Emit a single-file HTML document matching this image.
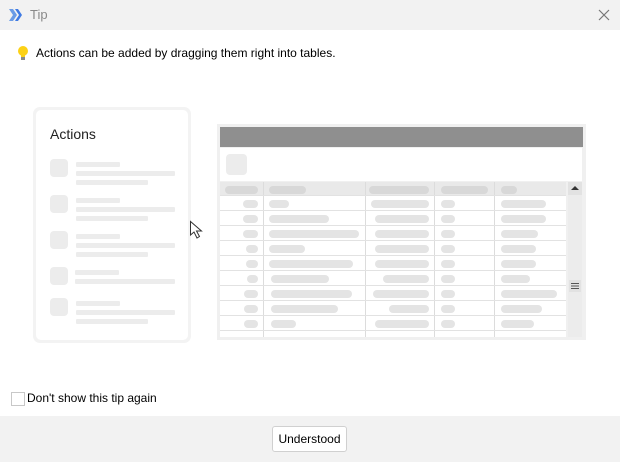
<!DOCTYPE html><html><head><style>
body{margin:0;width:620px;height:462px;position:relative;overflow:hidden;background:#fff;font-family:"Liberation Sans",sans-serif;}
.a{position:absolute}
.p{position:absolute;height:8px;border-radius:4px;background:#e4e4e4}
.l{position:absolute;height:5px;background:#ececec;border-radius:1px}
.sq{position:absolute;width:18px;height:18px;border-radius:4px;background:#ececec}
</style></head><body>
<div class="a" style="left:0;top:0;width:620px;height:30px;background:#f2f2f2"></div>
<svg class="a" style="left:9px;top:9px" width="14" height="12"><path d="M0 0h4l4 6-4 6H0l4-6z" fill="#6a9be6"/><path d="M6 0h3l4 6-4 6H6l4-6z" fill="#3f7ae3"/></svg>
<div class="a" style="left:30px;top:7px;font-size:13px;color:#8a8a8a">Tip</div>
<svg class="a" style="left:598px;top:9px" width="12" height="12"><path d="M1 1L11 11M11 1L1 11" stroke="#777" stroke-width="1.2"/></svg>
<svg class="a" style="left:17px;top:45px" width="12" height="17"><circle cx="6" cy="6" r="5" fill="#fcd116"/><rect x="4" y="8" width="4" height="4" fill="#fcd116"/><rect x="4" y="12" width="4" height="3" fill="#8a8a8a"/></svg>
<div class="a" style="left:36px;top:46px;font-size:12px;color:#000">Actions can be added by dragging them right into tables.</div>

<div class="a" style="left:33px;top:107px;width:158px;height:236px;background:#f3f3f3;border-radius:7px"></div>
<div class="a" style="left:36px;top:110px;width:152px;height:230px;background:#fff;border-radius:5px"></div>
<div class="a" style="left:50px;top:126px;font-size:14px;color:#222">Actions</div>
<div class="sq" style="left:50px;top:159px"></div><div class="l" style="left:76px;top:162px;width:44px"></div><div class="l" style="left:76px;top:171px;width:99px"></div><div class="l" style="left:76px;top:180px;width:72px"></div>
<div class="sq" style="left:50px;top:195px"></div><div class="l" style="left:76px;top:198px;width:44px"></div><div class="l" style="left:76px;top:207px;width:99px"></div><div class="l" style="left:76px;top:216px;width:72px"></div>
<div class="sq" style="left:50px;top:231px"></div><div class="l" style="left:76px;top:234px;width:44px"></div><div class="l" style="left:76px;top:243px;width:99px"></div><div class="l" style="left:76px;top:252px;width:72px"></div>
<div class="sq" style="left:50px;top:267px"></div><div class="l" style="left:75px;top:270px;width:44px"></div><div class="l" style="left:75px;top:279px;width:100px"></div>
<div class="sq" style="left:50px;top:298px"></div><div class="l" style="left:76px;top:301px;width:44px"></div><div class="l" style="left:76px;top:310px;width:99px"></div><div class="l" style="left:76px;top:319px;width:72px"></div>

<svg class="a" style="left:189px;top:220px" width="16" height="20"><path d="M1.5 1.5L1.5 15L5 12L8 18L10.5 16.5L7.5 11L12.5 11Z" fill="#fff" stroke="#333" stroke-width="1"/></svg>

<div class="a" style="left:217px;top:124px;width:369px;height:216px;background:#f0f0f0"></div>
<div class="a" style="left:220px;top:127px;width:363px;height:20px;background:#8f8f8f"></div>
<div class="a" style="left:220px;top:148px;width:362px;height:33px;background:#fff"></div>
<div class="a" style="left:226px;top:154px;width:21px;height:21px;border-radius:4px;background:#ececec"></div>
<div class="a" style="left:220px;top:182px;width:346px;height:155px;background:#fff"></div>
<div class="a" style="left:220px;top:182px;width:346px;height:13px;background:#e9e9e9"></div>
<div class="a" style="left:568px;top:182px;width:14px;height:155px;background:#ececec"></div>
<div class="a" style="left:568px;top:182px;width:14px;height:13px;background:#e2e2e2"></div>
<svg class="a" style="left:571px;top:185px" width="8" height="6"><path d="M0 5L4 1L8 5Z" fill="#333"/></svg>
<div class="a" style="left:569px;top:280px;width:12px;height:12px;background:#e2e2e2"></div>
<svg class="a" style="left:571px;top:282px" width="8" height="8"><path d="M0 1.5H8M0 4H8M0 6.5H8" stroke="#555"/></svg>
<div id="t"></div>
<script>
var h='';
[263,365,434,494].forEach(function(x){h+='<div class="a" style="left:'+x+'px;top:182px;width:1px;height:155px;background:#dcdcdc"></div>';});
for(var i=0;i<10;i++){h+='<div class="a" style="left:220px;top:'+(195+i*15)+'px;width:346px;height:1px;background:#e2e2e2"></div>';}
h+='<div class="p" style="left:225px;top:186px;width:33px;background:#d8d8d8"></div><div class="p" style="left:269px;top:186px;width:37px;background:#d8d8d8"></div><div class="p" style="left:369px;top:186px;width:60px;background:#d8d8d8"></div><div class="p" style="left:441px;top:186px;width:47px;background:#d8d8d8"></div><div class="p" style="left:501px;top:186px;width:16px;background:#d8d8d8"></div>';
var c1=[15,15,15,12,12,11,14,14,14];
var c2=[[269,289],[269,329],[269,359],[269,305],[269,353],[271,329],[271,352],[271,338],[271,296]];
var c3=[371,375,375,375,375,383,373,389,375];
var c5=[546,546,538,536,536,530,557,542,534];
for(var i=0;i<9;i++){var y=200+i*15;
h+='<div class="p" style="left:'+(258-c1[i])+'px;top:'+y+'px;width:'+c1[i]+'px"></div>';
h+='<div class="p" style="left:'+c2[i][0]+'px;top:'+y+'px;width:'+(c2[i][1]-c2[i][0])+'px"></div>';
h+='<div class="p" style="left:'+c3[i]+'px;top:'+y+'px;width:'+(429-c3[i])+'px"></div>';
h+='<div class="p" style="left:441px;top:'+y+'px;width:14px"></div>';
h+='<div class="p" style="left:501px;top:'+y+'px;width:'+(c5[i]-501)+'px"></div>';}
document.getElementById('t').innerHTML=h;
</script>

<div class="a" style="left:11px;top:392px;width:12px;height:12px;border:1px solid #c8c8c8;background:#fff"></div>
<div class="a" style="left:27px;top:391px;font-size:12px;color:#000">Don't show this tip again</div>
<div class="a" style="left:0;top:416px;width:620px;height:46px;background:#f2f2f2"></div>
<div class="a" style="left:272px;top:426px;width:73px;height:24px;background:#fff;border:1px solid #d0d0d0;border-radius:3px;font-size:12px;line-height:24px;text-align:center;color:#000">Understood</div>
</body></html>
